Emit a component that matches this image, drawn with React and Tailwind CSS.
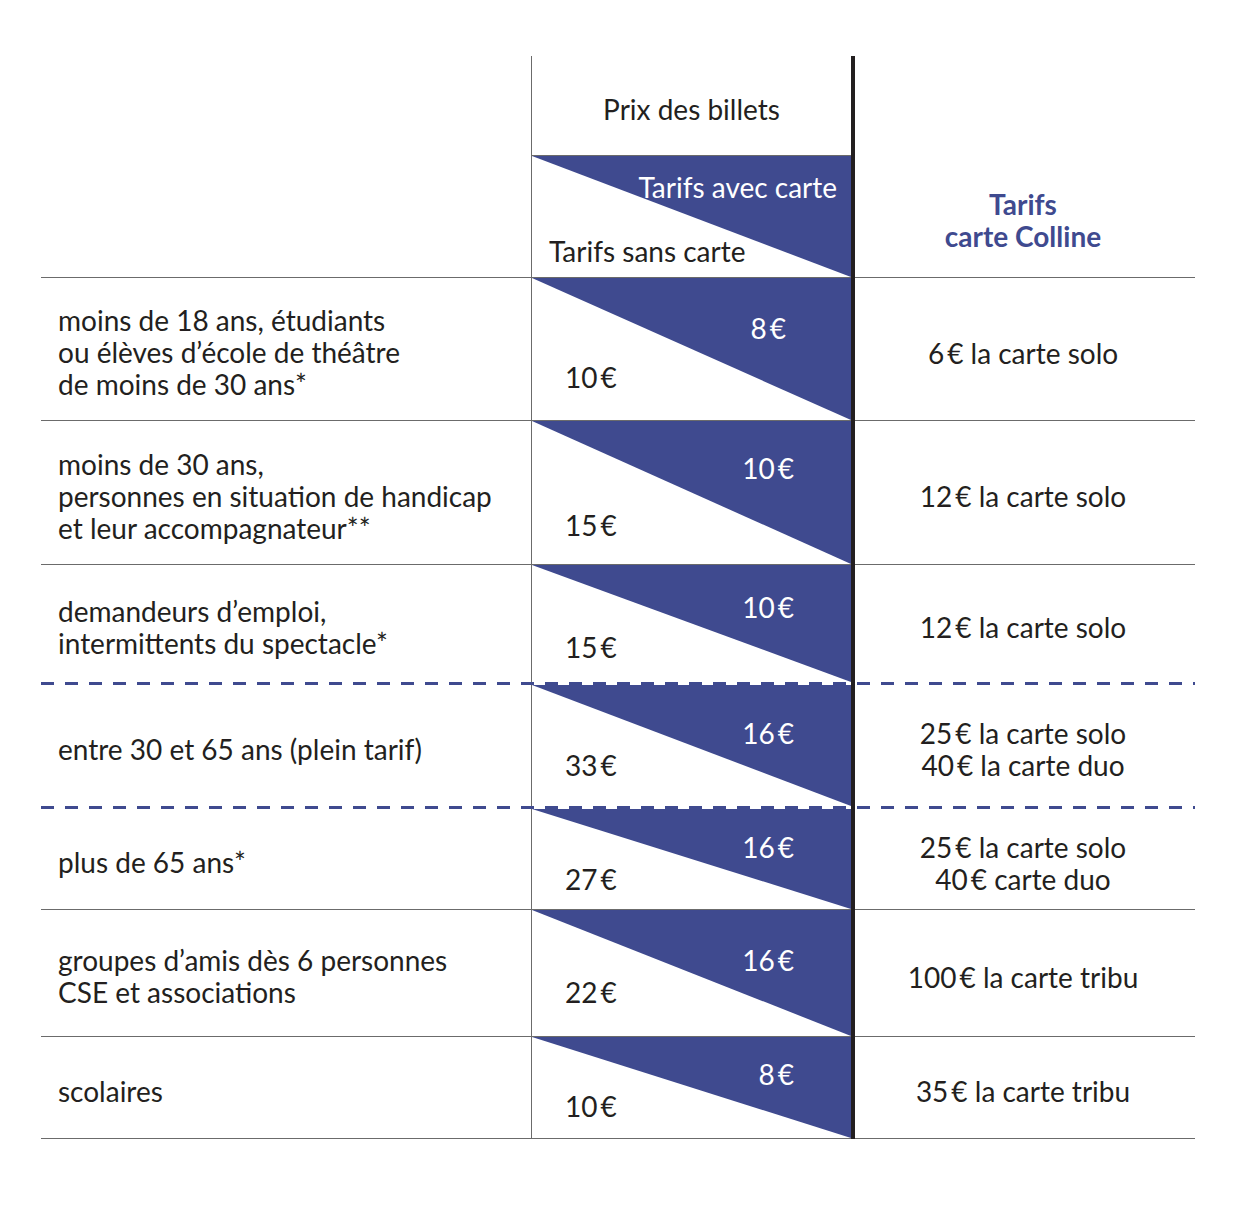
import React from 'react';

const Eur = ({ v }) => (
  <>
    {v}
    <span className="ml-[3px]">€</span>
  </>
);

const rows = [
  {
    label: ['moins de 18 ans, étudiants', 'ou élèves d’école de théâtre', 'de moins de 30 ans*'],
    avec: '8', sans: '10', carte: [['6', 'la carte solo']],
    h: 'h-[142px]', pt: 'pt-[34px]', mt: 'mt-[17px]', pr: 'pr-[65px]', line: 'solid',
  },
  {
    label: ['moins de 30 ans,', 'personnes en situation de handicap', 'et leur accompagnateur**'],
    avec: '10', sans: '15', carte: [['12', 'la carte solo']],
    h: 'h-[143px]', pt: 'pt-[31px]', mt: 'mt-[25px]', pr: 'pr-[57px]', line: 'solid',
  },
  {
    label: ['demandeurs d’emploi,', 'intermittents du spectacle*'],
    avec: '10', sans: '15', carte: [['12', 'la carte solo']],
    h: 'h-[117px]', pt: 'pt-[26px]', mt: 'mt-[8px]', pr: 'pr-[57px]', line: 'dashed',
  },
  {
    label: ['entre 30 et 65 ans (plein tarif)'],
    avec: '16', sans: '33', carte: [['25', 'la carte solo'], ['40', 'la carte duo']],
    h: 'h-[121px]', pt: 'pt-[32px]', mt: 'mt-0', pr: 'pr-[57px]', line: 'dashed',
  },
  {
    label: ['plus de 65 ans*'],
    avec: '16', sans: '27', carte: [['25', 'la carte solo'], ['40', 'carte duo']],
    h: 'h-[100px]', pt: 'pt-[22px]', mt: 'mt-0', pr: 'pr-[57px]', line: 'solid',
  },
  {
    label: ['groupes d’amis dès 6 personnes', 'CSE et associations'],
    avec: '16', sans: '22', carte: [['100', 'la carte tribu']],
    h: 'h-[126px]', pt: 'pt-[34px]', mt: 'mt-0', pr: 'pr-[57px]', line: 'solid',
  },
  {
    label: ['scolaires'],
    avec: '8', sans: '10', carte: [['35', 'la carte tribu']],
    h: 'h-[101px]', pt: 'pt-[21px]', mt: 'mt-0', pr: 'pr-[57px]', line: 'solid',
  },
];

const Triangle = () => (
  <svg className="absolute inset-0 w-full h-full" viewBox="0 0 100 100" preserveAspectRatio="none">
    <polygon points="0,0 100,0 100,100" fill="#3f4a8f" />
  </svg>
);

const Separator = ({ type }) =>
  type === 'dashed' ? (
    <div className="h-[3px] bg-[repeating-linear-gradient(to_right,#3f4a8f_0_13px,transparent_13px_24px)]" />
  ) : (
    <div className="h-px bg-[#6b6b6b]" />
  );

export default function App() {
  return (
    <div className="min-h-[1223px] bg-white pt-[56px] pl-[41px] font-['Lato',sans-serif] text-[28px] leading-[32px] text-[#231f20]">
      <div className="relative w-[1154px]">
        {/* header */}
        <div className="grid grid-cols-[490px_320px_344px]">
          <div />
          <div className="flex flex-col border-l border-[#6b6b6b]">
            <div className="h-[100px] pt-[6px] flex items-center justify-center border-b border-[#6b6b6b]">
              Prix des billets
            </div>
            <div className="relative h-[121px]">
              <Triangle />
              <div className="relative pt-[15px] pr-[14px] text-right text-white">Tarifs avec carte</div>
              <div className="relative mt-[32px] pl-[17px]">Tarifs sans carte</div>
            </div>
          </div>
          <div className="flex flex-col justify-end">
            <div className="h-[121px] pt-[7px] flex flex-col items-center justify-center font-bold text-[#3f4a8f]">
              <span>Tarifs</span>
              <span>carte Colline</span>
            </div>
          </div>
        </div>
        <Separator type="solid" />

        {rows.map((row, i) => (
          <React.Fragment key={i}>
            <div className={`grid grid-cols-[490px_320px_344px] ${row.h}`}>
              <div className="flex flex-col justify-center pl-[17px] pt-[6px]">
                {row.label.map(l => <span key={l}>{l}</span>)}
              </div>
              <div className={`relative border-l border-[#6b6b6b] ${row.pt}`}>
                <Triangle />
                <div className={`relative text-right text-white ${row.pr}`}><Eur v={row.avec} /></div>
                <div className={`relative pl-[33px] ${row.mt}`}><Eur v={row.sans} /></div>
              </div>
              <div className="flex flex-col items-center justify-center pt-[7px]">
                {row.carte.map(([v, t]) => <span key={v + t}><Eur v={v} /> {t}</span>)}
              </div>
            </div>
            <Separator type={row.line} />
          </React.Fragment>
        ))}

        {/* thick vertical rule between ticket prices and card prices */}
        <div className="absolute top-0 bottom-0 left-[810px] w-[4px] bg-[#231f20]" />
      </div>
    </div>
  );
}
